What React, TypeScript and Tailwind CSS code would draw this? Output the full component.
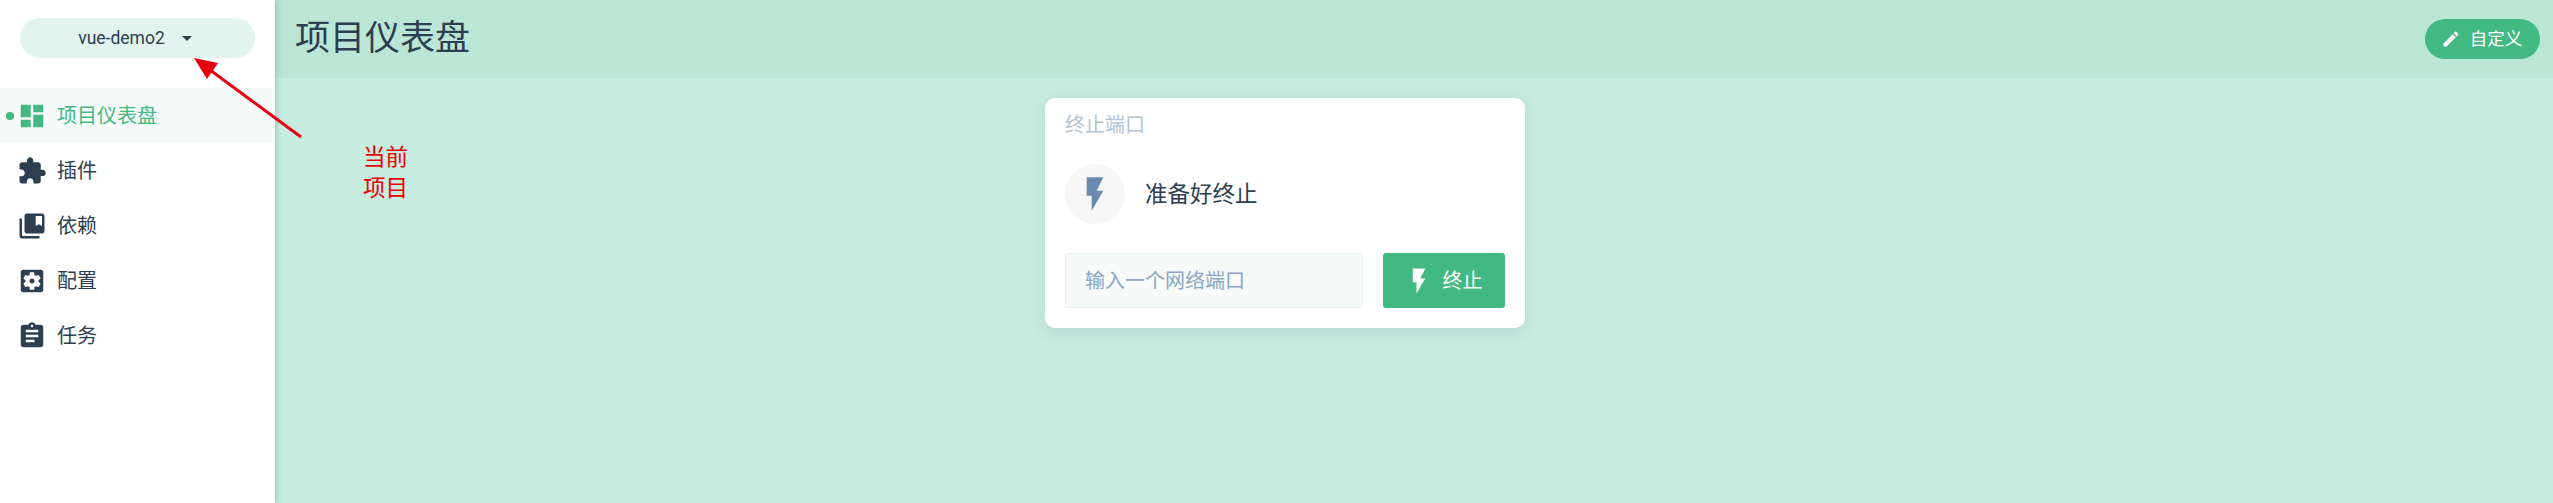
import { useState } from 'react'

const FONT = "font-['Roboto','Noto_Sans_CJK_SC',sans-serif]"

const Icon = ({ d, className }: { d: string; className?: string }) => (
  <svg
    viewBox="0 0 24 24"
    fill="currentColor"
    fillRule="evenodd"
    className={className}
  >
    <path d={d} />
  </svg>
)

const FLASH = 'M7 2v11h3v9l7-12h-4l4-8z'
const EDIT =
  'M3 17.25V21h3.75L17.81 9.94l-3.75-3.75L3 17.25zM20.71 7.04c.39-.39.39-1.02 0-1.41l-2.34-2.34c-.39-.39-1.02-.39-1.41 0l-1.83 1.83 3.75 3.75 1.83-1.83z'

const navItems = [
  {
    id: 1,
    name: '项目仪表盘',
    icon: 'M3 13h8V3H3v10zm0 8h8v-6H3v6zm10 0h8V11h-8v10zm0-18v6h8V3h-8z',
  },
  {
    id: 2,
    name: '插件',
    icon: 'M20.5 11H19V7c0-1.1-.9-2-2-2h-4V3.5C13 2.12 11.88 1 10.5 1S8 2.12 8 3.5V5H4c-1.1 0-1.99.9-1.99 2v3.8H3.5c1.49 0 2.7 1.21 2.7 2.7s-1.21 2.7-2.7 2.7H2V20c0 1.1.9 2 2 2h3.8v-1.5c0-1.49 1.21-2.7 2.7-2.7 1.49 0 2.7 1.21 2.7 2.7V22H17c1.1 0 2-.9 2-2v-4h1.5c1.38 0 2.5-1.12 2.5-2.5S21.88 11 20.5 11z',
  },
  {
    id: 3,
    name: '依赖',
    icon: 'M4 6H2v14c0 1.1.9 2 2 2h14v-2H4V6zM20 2H8c-1.1 0-2 .9-2 2v12c0 1.1.9 2 2 2h12c1.1 0 2-.9 2-2V4c0-1.1-.9-2-2-2zm0 10l-2.5-1.5L15 12V4h5v8z',
  },
  {
    id: 4,
    name: '配置',
    icon: 'M12 10c-1.1 0-2 .9-2 2s.9 2 2 2 2-.9 2-2-.9-2-2-2zm7-7H5c-1.11 0-2 .9-2 2v14c0 1.1.89 2 2 2h14c1.11 0 2-.9 2-2V5c0-1.1-.89-2-2-2zm-1.75 9c0 .23-.02.46-.05.68l1.48 1.16c.13.11.17.3.08.45l-1.4 2.42c-.09.15-.27.21-.43.15l-1.74-.7c-.36.28-.76.51-1.18.69l-.26 1.85c-.03.17-.18.3-.35.3h-2.8c-.17 0-.32-.13-.35-.29l-.26-1.85c-.43-.18-.82-.41-1.18-.69l-1.74.7c-.16.06-.34 0-.43-.15l-1.4-2.42c-.09-.15-.05-.34.08-.45l1.48-1.16c-.03-.23-.05-.46-.05-.69 0-.23.02-.46.05-.68l-1.48-1.16c-.13-.11-.17-.3-.08-.45l1.4-2.42c.09-.15.27-.21.43-.15l1.74.7c.36-.28.76-.51 1.18-.69l.26-1.85c.03-.17.18-.3.35-.3h2.8c.17 0 .32.13.35.29l.26 1.85c.43.18.82.41 1.18.69l1.74-.7c.16-.06.34 0 .43.15l1.4 2.42c.09.15.05.34-.08.45l-1.48 1.16c.03.23.05.46.05.69z',
  },
  {
    id: 5,
    name: '任务',
    icon: 'M19 3h-4.18C14.4 1.84 13.3 1 12 1c-1.3 0-2.4.84-2.82 2H5c-1.1 0-2 .9-2 2v14c0 1.1.9 2 2 2h14c1.1 0 2-.9 2-2V5c0-1.1-.9-2-2-2zm-7 0c.55 0 1 .45 1 1s-.45 1-1 1-1-.45-1-1 .45-1 1-1zm2 14H7v-2h7v2zm3-4H7v-2h10v2zm0-4H7V7h10v2z',
  },
]

const Sidebar = () => (
  <aside className="relative z-10 flex w-[275px] shrink-0 flex-col bg-white shadow-[2px_0_5px_rgba(44,62,80,0.2)]">
    {/* project switcher */}
    <div className="px-5 pt-[18px] pb-[30px]">
      <div className="flex h-10 items-center justify-center rounded-full bg-[#e2f4ed] pl-[2px] text-[17.5px] text-[#2c3e50]">
        <span>vue-demo2</span>
        <Icon d="M7 10l5 5 5-5z" className="ml-[10px] h-6 w-6" />
      </div>
    </div>

    {/* links section */}
    <nav className="flex flex-col">
      {navItems.map((item) => {
        const isActive = item.id === 1
        return (
          <div
            key={item.id}
            className={`relative flex h-[55.2px] items-center pl-[17px] text-[20px] ${isActive ? 'bg-[#f6fbf9] text-[#42b983]' : 'text-[#2c3e50]'}`}
          >
            {isActive && (
              <span className="absolute top-[24px] left-[6px] h-[8px] w-[8px] rounded-full bg-[#42b983]" />
            )}
            <Icon d={item.icon} className="h-[30px] w-[30px]" />
            <span className="ml-[10px]">{item.name}</span>
          </div>
        )
      })}
    </nav>
  </aside>
)

const KillPortCard = () => {
  const [port, setPort] = useState('')

  return (
    <div className="flex h-[230px] w-[480px] flex-col rounded-[10px] bg-white px-5 shadow-[0_4px_16px_rgba(44,62,80,0.1)]">
      <div className="pt-[14px] text-[20px] leading-[27px] text-[#b4c4d2]">终止端口</div>

      <div className="mt-[25px] flex items-center">
        <div className="flex h-[60px] w-[60px] items-center justify-center rounded-full bg-[#f6f6f6]">
          <Icon d={FLASH} className="h-10 w-10 text-[#6a8bad]" />
        </div>
        <span className="mt-[2px] ml-5 text-[22.5px] text-[#2c3e50]">准备好终止</span>
      </div>

      <div className="mt-[29px] flex gap-5">
        <input
          value={port}
          onChange={(e) => setPort(e.target.value)}
          placeholder="输入一个网络端口"
          className="h-[55px] w-[298px] rounded-[3px] border border-[#e2f4ed] bg-[#f6fbf9] px-[19px] text-[20px] text-[#2c3e50] outline-none placeholder:text-[#8ba5c2]"
        />
        <button className="flex h-[55px] w-[122px] items-center justify-center rounded-[3px] bg-[#42b983] text-[20px] text-white">
          <Icon d={FLASH} className="h-[30px] w-[30px]" />
          <span className="mr-[2px] ml-[9px]">终止</span>
        </button>
      </div>
    </div>
  )
}

export default function App() {
  return (
    <div className={`relative flex h-[503px] w-[2553px] overflow-hidden ${FONT}`}>
      <Sidebar />

      <main className="flex flex-1 flex-col bg-[#c6ebdf]">
        <header className="flex h-[78px] shrink-0 items-center justify-between bg-[#bbe6d6] pr-[13px] pl-5">
          <h1 className="text-[35px] font-normal text-[#2c3e50]">项目仪表盘</h1>
          <button className="flex h-10 w-[115px] items-center justify-center rounded-full bg-[#42b983] pr-[2px] text-[17.5px] text-white">
            <Icon d={EDIT} className="h-5 w-5" />
            <span className="ml-[9px]">自定义</span>
          </button>
        </header>

        <div className="pt-5 pl-[770px]">
          <KillPortCard />
        </div>
      </main>

      {/* annotation drawn over the screenshot */}
      <svg className="absolute top-0 left-0 z-20 h-[160px] w-[320px]" viewBox="0 0 320 160">
        <line x1="301" y1="137" x2="210" y2="70" stroke="#e60012" strokeWidth="3" />
        <polygon points="194,58 218,63 207,79" fill="#e60012" />
      </svg>
      <div className="absolute top-[142px] left-[363px] z-20 w-[46px] text-[22.5px] leading-[31px] text-[#f00000]">
        当前
        <br />
        项目
      </div>
    </div>
  )
}
